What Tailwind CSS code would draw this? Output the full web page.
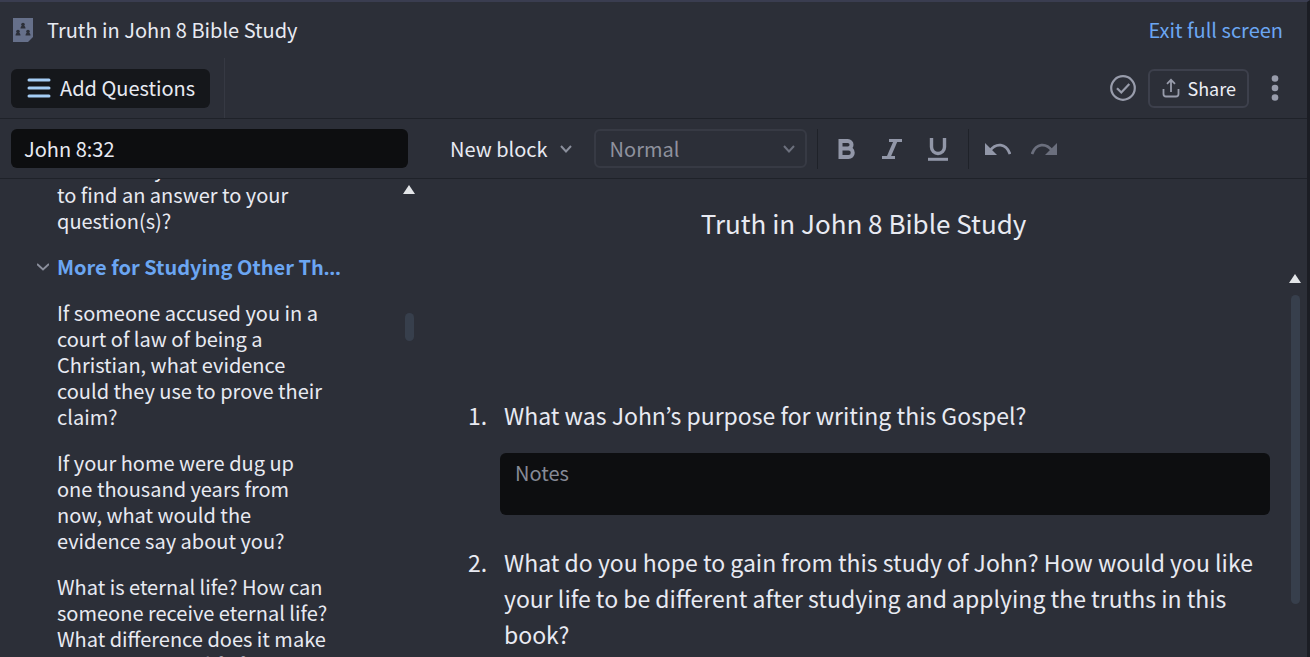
<!doctype html>
<html lang="en">
<head>
	<title>Truth in John 8 Bible Study</title>
	<meta charset="UTF-8">
	<meta content="width=device-width, initial-scale=1.0" name="viewport">
	<script src="https://cdn.jsdelivr.net/npm/@tailwindcss/browser@4"></script>
</head>

<body class="bg-[#2c2f38] text-[#e8eaf2] font-['Noto_Sans_CJK_KR','Noto_Sans',sans-serif] text-[20px] leading-[26px]">

<div class="flex flex-col h-screen overflow-hidden border-t-2 border-t-[#3a3d50] border-r-3 border-r-[#1b1d24]">

	<!-- Title bar -->
	<header class="flex items-center justify-between h-14 shrink-0 pl-3 pr-6">
		<div class="flex items-center gap-[13px]">
			<svg class="w-[22px] h-[26px]" viewBox="0 0 22 26" fill="none">
				<path d="M1 1h20v19l-5 5H1z" fill="#66708a"/>
				<g fill="#2c2f38">
					<circle cx="11" cy="7.500" r="1.800"/>
					<path d="M8.500 11.500c0-2 1-3 2.500-3s2.500 1 2.500 3z"/>
					<circle cx="6" cy="14.500" r="1.800"/>
					<path d="M3.500 18.500c0-2 1-3 2.500-3s2.500 1 2.500 3z"/>
					<circle cx="16" cy="14.500" r="1.800"/>
					<path d="M13.500 18.500c0-2 1-3 2.500-3s2.500 1 2.500 3z"/>
				</g>
			</svg>
			<h1>Truth in John 8 Bible Study</h1>
		</div>
		<a class="text-[#6ba6f2]" href="#">Exit full screen</a>
	</header>

	<!-- Actions -->
	<div class="flex items-center justify-between h-[61px] shrink-0 pl-[11px] pr-7 border-b border-[#1f2229]">
		<div class="flex items-center h-full border-r border-[#363943] pr-3.5">
			<button class="flex items-center gap-[9px] h-[39px] pl-4 pr-[15px] rounded-md bg-[#15171b]">
				<svg class="w-6 h-5" viewBox="0 0 24 20" stroke="#a5cdf5" stroke-width="3" stroke-linecap="round">
					<path d="M2 2h20M2 10h20M2 18h20"/>
				</svg>
				Add Questions
			</button>
		</div>
		<div class="flex items-center text-[#989cab]">
			<button aria-label="Mark complete">
				<svg class="w-[26px] h-[26px]" viewBox="0 0 26 26" fill="none" stroke="currentColor" stroke-width="2.200">
					<circle cx="13" cy="13" r="11.800"/>
					<path d="M7 13.200l4.300 4.300 8-8.500"/>
				</svg>
			</button>
			<button class="flex items-center gap-1.5 h-[39px] ml-3 px-[11px] rounded-md border-2 border-[#3d404c]">
				<svg class="w-5 h-5" viewBox="0 0 20 20" fill="none" stroke="currentColor" stroke-width="1.800">
					<path d="M10 14V2M6 5.800L10 1.800l4 4M2.500 11v5q0 2.500 2.500 2.500h10q2.500 0 2.500-2.500v-5"/>
				</svg>
				<span class="text-[18px] text-[#eceef5]">Share</span>
			</button>
			<button class="ml-[22px]" aria-label="More">
				<svg class="w-2 h-[26px]" viewBox="0 0 8 26" fill="currentColor">
					<circle cx="4" cy="3.500" r="3.300"/>
					<circle cx="4" cy="13" r="3.300"/>
					<circle cx="4" cy="22.500" r="3.300"/>
				</svg>
			</button>
		</div>
	</div>

	<!-- Search and formatting -->
	<div class="flex items-center h-[60px] shrink-0 pl-[11px] border-b border-[#1f2229]">
		<input class="w-[397px] h-[39px] px-[13px] rounded-md bg-[#0d0e10]" aria-label="Passage" type="text" value="John 8:32">
		<button class="flex items-center gap-3 ml-[42px]">
			New block
			<svg class="w-3 h-2" viewBox="0 0 12 8" fill="none" stroke="#8b8f9c" stroke-width="2"><path d="M1 1l5 5.500L11 1"/></svg>
		</button>
		<div class="grid items-center ml-[22px]">
			<select class="col-start-1 row-start-1 appearance-none w-[213px] h-[39px] px-3.5 rounded-md border-2 border-[#373a44] text-[#8f929e]" aria-label="Text style">
				<option>Normal</option>
			</select>
			<svg class="col-start-1 row-start-1 justify-self-end mr-3 w-3 h-2 pointer-events-none" viewBox="0 0 12 8" fill="none" stroke="#6c707d" stroke-width="2"><path d="M1 1l5 5.500L11 1"/></svg>
		</div>
		<div class="flex items-center h-10 ml-2.5 pl-[18px] pr-5 gap-[26px] border-x border-[#1f2229] text-[#9297a8]">
			<button aria-label="Bold">
				<svg class="w-5 h-6" viewBox="0 0 20 24" fill="none" stroke="currentColor" stroke-width="4">
					<path d="M4.500 4h7.300a3.400 3.400 0 0 1 0 7.500H4.500M4.500 11.500h8a4 4 0 0 1 0 8.500h-8zM4.500 2v20"/>
				</svg>
			</button>
			<button aria-label="Italic">
				<svg class="w-5 h-6" viewBox="0 0 20 24" fill="none" stroke="currentColor" stroke-width="3">
					<path d="M7 3.500h13M0 20.500h13"/>
					<path d="M13.800 3.500L6.400 20.500" stroke-width="3.800"/>
				</svg>
			</button>
			<button aria-label="Underline">
				<svg class="w-5 h-6" viewBox="0 0 20 24" fill="none" stroke="currentColor">
					<path d="M3.500 1v9a6.500 6.500 0 0 0 13 0V1" stroke-width="3.400"/>
					<path d="M0 22.300h20" stroke-width="3"/>
				</svg>
			</button>
		</div>
		<div class="flex items-center ml-4 gap-5 text-[#9297a8]">
			<button aria-label="Undo">
				<svg class="w-[26px] h-3" viewBox="0 0 26 12" fill="none">
					<path d="M0 0v12h12z" fill="currentColor"/>
					<path d="M5 7.500C11-.5 21 0 25 11" stroke="currentColor" stroke-width="2.800"/>
				</svg>
			</button>
			<button class="text-[#6b6f7d]" aria-label="Redo">
				<svg class="w-[26px] h-3" viewBox="0 0 26 12" fill="none">
					<path d="M26 0v12H14z" fill="currentColor"/>
					<path d="M21 7.500C15-.5 5 0 1 11" stroke="currentColor" stroke-width="2.800"/>
				</svg>
			</button>
		</div>
	</div>

	<div class="flex flex-1 min-h-0">

		<!-- Question list -->
		<aside class="flex w-[420px] shrink-0 overflow-hidden">
			<div class="w-[346px] -mt-[23px] pl-[57px] space-y-5">
				<p>How were you able<br>to find an answer to your<br>question(s)?</p>
				<button class="flex items-center gap-2 -ml-5 w-[309px] h-[26px] font-bold text-[#6ba6f2]">
					<svg class="w-3 h-2 shrink-0" viewBox="0 0 12 8" fill="none" stroke="#8b8f9c" stroke-width="2"><path d="M0 1l6 5.500L12 1"/></svg>
					<!-- Noto Sans keeps the ellipsis on the baseline -->
					<span class="truncate font-['Noto_Sans',sans-serif]"><span class="font-['Noto_Sans_CJK_KR','Noto_Sans',sans-serif]">More for Studying Other Themes</span></span>
				</button>
				<p>If someone accused you in a<br>court of law of being a<br>Christian, what evidence<br>could they use to prove their<br>claim?</p>
				<p>If your home were dug up<br>one thousand years from<br>now, what would the<br>evidence say about you?</p>
				<p>What is eternal life? How can<br>someone receive eternal life?<br>What difference does it make<br>in your day and life for the</p>
			</div>
			<div class="flex flex-col items-center ml-auto mr-[5px] w-3">
				<svg class="w-3 h-[9px] mt-1.5" viewBox="0 0 12 9"><path d="M6 0l6 9H0z" fill="#e3e5e8"/></svg>
				<div class="w-[9px] h-7 mt-[119px] rounded-full bg-[#373f4c]"></div>
			</div>
		</aside>

		<!-- Document -->
		<main class="flex flex-col flex-1 min-w-0">
			<h2 class="pt-[26px] text-center text-[26px] leading-[36px]">Truth in John 8 Bible Study</h2>
			<div class="flex flex-1 min-h-0 mt-[33px]">
				<ol class="flex-1 pt-[123px] pl-12 text-[23px] leading-[36px] overflow-hidden">
					<li class="flex">
						<span class="w-9 shrink-0">1.</span>
						<p>What was John’s purpose for writing this Gospel?</p>
					</li>
					<li class="flex mt-5 mb-[29px] pl-8">
						<textarea class="flex-1 h-[62px] px-[15px] py-[7px] rounded-md bg-[#0d0e10] text-[20px] leading-[26px] placeholder:text-[#868a96] resize-none" aria-label="Notes" placeholder="Notes"></textarea>
					</li>
					<li class="flex">
						<span class="w-9 shrink-0">2.</span>
						<p>What do you hope to gain from this study of John? How would you like your life to be different after studying and applying the truths in this book?</p>
					</li>
				</ol>
				<div class="flex flex-col items-center ml-[19px] mr-1.5 w-3">
					<svg class="w-3 h-[9px] shrink-0" viewBox="0 0 12 9"><path d="M6 0l6 9H0z" fill="#e3e5e8"/></svg>
					<div class="w-[9px] flex-1 mt-3 mb-[53px] rounded-full bg-[#373f4c]"></div>
				</div>
			</div>
		</main>

	</div>
</div>

</body>
</html>
